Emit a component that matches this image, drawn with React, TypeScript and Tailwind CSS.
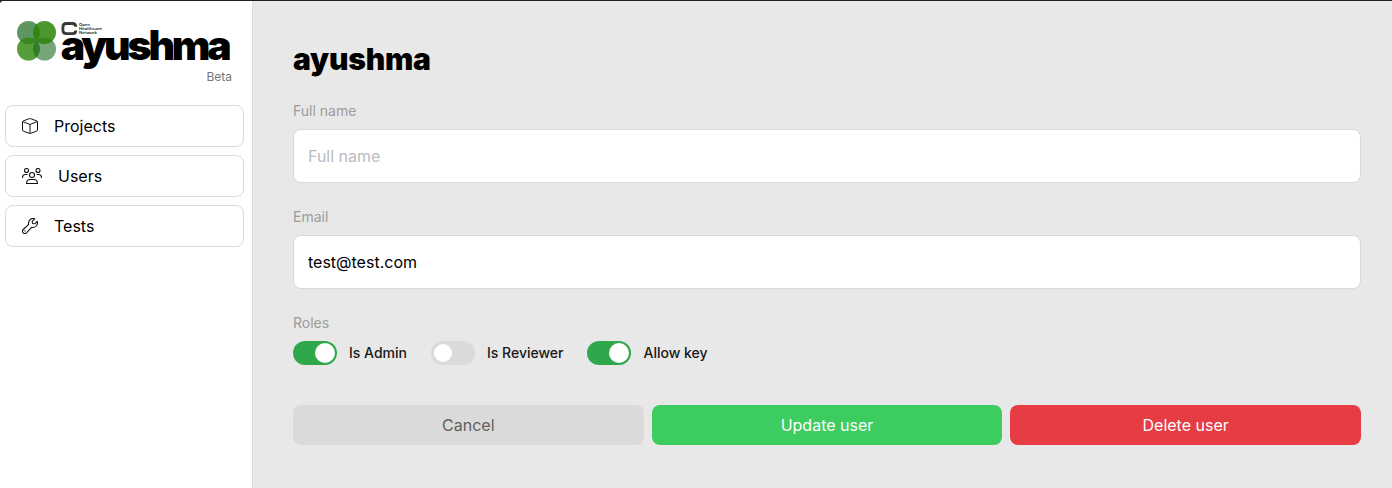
import type { ReactNode } from 'react';

function Logo() {
  return (
    <svg width="216" height="52" viewBox="16 20 216 52" className="block" role="img" aria-label="ayushma">
      <circle cx="28.5" cy="32.5" r="11.5" className="fill-[#196920] opacity-70" />
      <circle cx="28.5" cy="49" r="11.5" className="fill-[#2b8408] opacity-80" />
      <circle cx="44.5" cy="49" r="11.5" className="fill-[#196920] opacity-60" />
      <circle cx="44.5" cy="32.5" r="11.5" className="fill-[#2b8408] opacity-85" />
      <path
        d="M75.800 26.800C75.800 24.300 74.600 23.500 72.500 23.500H66.500C63.800 23.500 62.900 24.600 62.900 27V30.200C62.900 32.600 63.800 33.700 66.500 33.700H72.500C74.600 33.700 75.800 32.900 75.800 30.600"
        fill="none"
        stroke="#3a3a3a"
        strokeWidth="2.8"
      />
      <g className="fill-[#222] font-['Inter',sans-serif] text-[3.3px] font-semibold">
        <text x="79" y="25.600" textLength="11" lengthAdjust="spacingAndGlyphs">Open</text>
        <text x="79" y="30" textLength="23" lengthAdjust="spacingAndGlyphs">Healthcare</text>
        <text x="79" y="34.400" textLength="18" lengthAdjust="spacingAndGlyphs">Network</text>
      </g>
      <text
        x="60.800"
        y="60"
        textLength="171"
        className="fill-black font-['Inter',sans-serif] text-[41px] font-black"
      >
        ayushma
      </text>
    </svg>
  );
}

function CubeIcon() {
  return (
    <svg width="16" height="16" viewBox="0 0 16 16" fill="none" stroke="#111" strokeWidth="1" strokeLinejoin="round">
      <path d="M7.500 .6Q8 .4 8.500 .6L14.700 2.900Q15.500 3.200 15.500 4V12Q15.500 12.800 14.800 13.100L8.500 15.400Q8 15.600 7.500 15.400L1.200 13.100Q.5 12.800 .5 12V4Q.5 3.200 1.300 2.900ZM.8 3.600L8 6.500L15.200 3.600M8 6.500V15.400" />
    </svg>
  );
}

function UsersIcon() {
  return (
    <svg width="20" height="16" viewBox="0 0 20 16" fill="none" stroke="#111" strokeWidth="1.1" strokeLinecap="round" strokeLinejoin="round">
      <circle cx="4.500" cy="2.500" r="2" />
      <circle cx="16" cy="2.500" r="2" />
      <circle cx="10" cy="7" r="2.500" />
      <path d="M.5 9.500C.5 7.500 1.800 6.500 3.300 6.500H5M19.500 9.500C19.500 7.500 18.200 6.500 16.700 6.500H15M4.500 15.500C4.500 13 6 11.500 8.200 11.500H11.800C14 11.500 15.500 13 15.500 15.500Z" />
    </svg>
  );
}

function WrenchIcon() {
  return (
    <svg width="16" height="16" viewBox="0 0 16 16" fill="none" stroke="#111" strokeWidth="1.1" strokeLinejoin="round">
      <path d="M12.700 .8C10.500 .1 8.200 1 7.100 3C6.500 4.100 6.400 5.300 6.700 6.400L1.200 11.500C.3 12.400.3 13.900 1.200 14.800S3.600 15.700 4.500 14.800L9.600 9.300C12.100 9.900 14.600 8.600 15.300 6.200C15.600 5.200 15.500 4.200 15.200 3.300L12.700 5.800L10.500 5.500L10.200 3.300L12.700 .8Z" />
      <circle cx="2.900" cy="13.100" r=".2" />
    </svg>
  );
}

function NavItem({ icon, label }: { icon: ReactNode; label: string }) {
  return (
    <a className="flex h-[42px] items-center gap-4 rounded-lg border border-[#dadada] px-4 text-base text-black">
      {icon}
      <span>{label}</span>
    </a>
  );
}

function Field({ label, value }: { label: string; value: string }) {
  return (
    <label className="flex flex-col gap-2">
      <span className="text-sm text-[#9c9c9c]">{label}</span>
      <input
        className="h-[54px] w-full rounded-lg border border-[#d9d9d9] bg-white px-3.5 text-base text-black outline-none placeholder:text-[#b9bbc0]"
        placeholder={label}
        defaultValue={value}
      />
    </label>
  );
}

function Toggle({ label, on }: { label: string; on: boolean }) {
  return (
    <div className="flex items-center">
      <span
        className={
          on
            ? 'flex h-6 w-11 items-center justify-end rounded-full bg-[#2fa84c] px-0.5'
            : 'flex h-6 w-11 items-center rounded-full bg-[#dadada] px-[3px]'
        }
      >
        <span className={on ? 'size-5 rounded-full bg-white' : 'size-[18px] rounded-full bg-white'} />
      </span>
      <span className="ml-3 text-sm font-medium text-[#181818]">{label}</span>
    </div>
  );
}

export default function App() {
  return (
    <div className="h-[488px] w-full bg-[#202022] pt-px font-['Inter',sans-serif]">
      <div className="flex h-full overflow-hidden rounded-tl-[4px] bg-[#e8e8e8]">
        <aside className="w-[253px] shrink-0 border-r border-[#dcdcdc] bg-white">
          <div className="pt-[19px] pl-4">
            <Logo />
            <div className="w-[216px] text-right text-xs leading-[10px] text-[#777]">Beta</div>
          </div>
          <nav className="mt-[23px] ml-[5px] flex w-[239px] flex-col gap-2">
            <NavItem icon={<CubeIcon />} label="Projects" />
            <NavItem icon={<UsersIcon />} label="Users" />
            <NavItem icon={<WrenchIcon />} label="Tests" />
          </nav>
        </aside>
        <main className="flex-1 pt-10 pr-[31px] pl-10">
          <h1 className="text-3xl font-black tracking-[-0.2px] text-black">ayushma</h1>
          <div className="mt-6 flex flex-col gap-6">
            <Field label="Full name" value="" />
            <Field label="Email" value="test@test.com" />
            <section>
              <div className="text-sm text-[#9c9c9c]">Roles</div>
              <div className="mt-2 flex gap-6">
                <Toggle label="Is Admin" on />
                <Toggle label="Is Reviewer" on={false} />
                <Toggle label="Allow key" on />
              </div>
            </section>
          </div>
          <div className="mt-10 grid grid-cols-3 gap-2 text-base">
            <button className="h-10 rounded-lg bg-[#dadada] text-[#5f5f5f]">Cancel</button>
            <button className="h-10 rounded-lg bg-[#3dcc60] text-white">Update user</button>
            <button className="h-10 rounded-lg bg-[#e63d44] text-white">Delete user</button>
          </div>
        </main>
      </div>
    </div>
  );
}
